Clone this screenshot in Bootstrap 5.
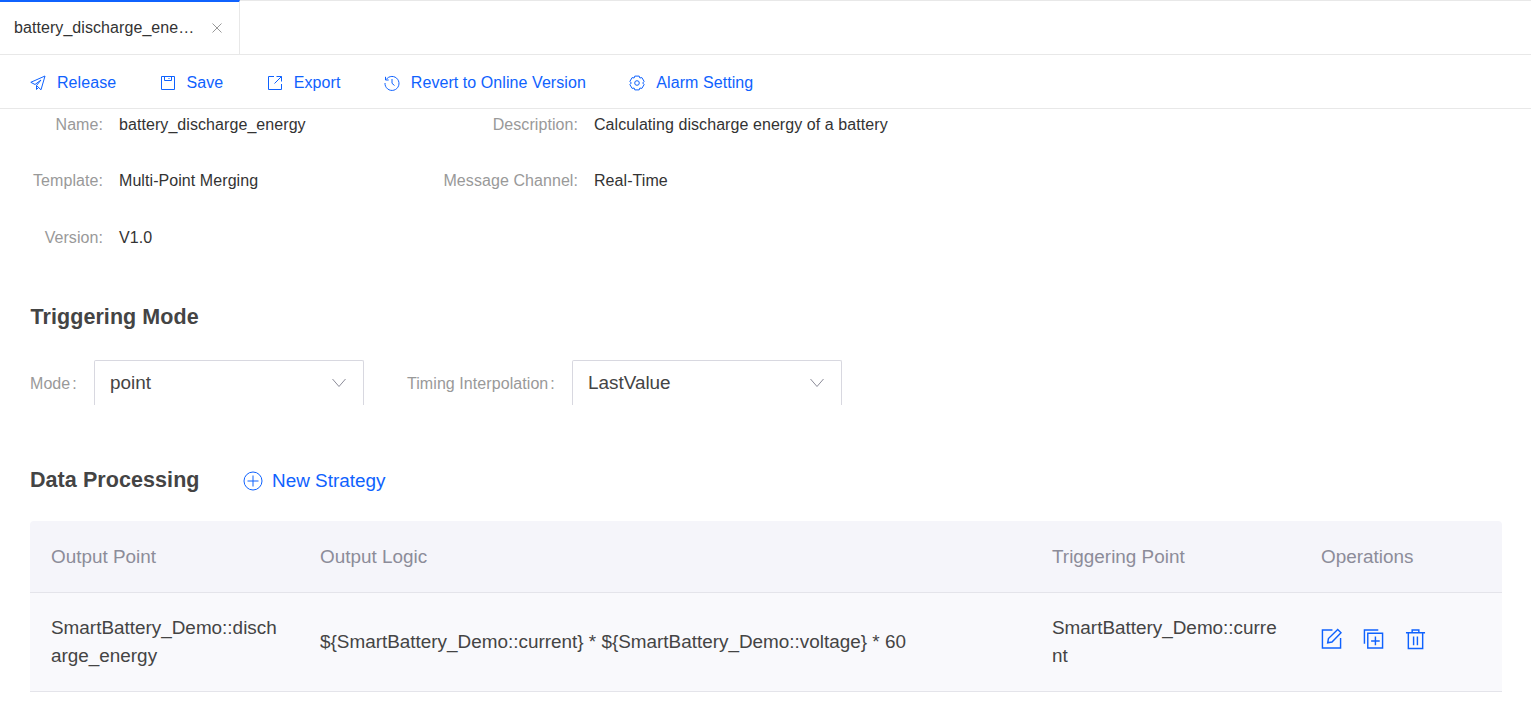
<!DOCTYPE html>
<html lang="en">
<head>
<meta charset="UTF-8">
<title>battery_discharge_energy</title>
<link href="https://cdn.jsdelivr.net/npm/bootstrap@5.3.3/dist/css/bootstrap.min.css" rel="stylesheet">
<style>
html, body { height: 707px; overflow: hidden; }
body { font-family: "Liberation Sans", Arial, sans-serif; font-size: 16px; letter-spacing: .07px; color: #333; background: #fff; }
.tab-strip { height: 55px; border-top: 1px solid #e8e8e8; border-bottom: 1px solid #e8e8e8; }
.tab-active { width: 240px; height: 54px; margin-top: -1px; border-top: 2px solid #0f62fe; border-right: 1px solid #e8e8e8; background: #fff; padding: 0 17px 0 14px; color: #333; }
.tab-title { width: 182px; white-space: nowrap; overflow: hidden; text-overflow: ellipsis; }
.tool-strip { height: 54px; border-bottom: 1px solid #e8e8e8; padding-left: 30px; gap: 43.4px; }
.tool-item { color: #0f62fe; gap: 11px; text-decoration: none; padding-top: 2px; }
.form-area { padding-top: 3.7px; }
.field-row { height: 56.5px; }
.f-label { color: #999; text-align: right; flex: none; white-space: nowrap; }
.f-label.one { width: 103px; }
.f-label.two { width: 259px; }
.f-value { flex: none; white-space: nowrap; margin-left: 16px; }
.f-value.one { width: 200px; }
.sec-title { font-size: 21.5px; font-weight: 700; color: #444; margin: 0; line-height: 26px; }
.sec-trigger { margin: 21.8px 0 0 30.5px; }
.mode-row { padding-left: 30px; margin-top: 30px; height: 45px; }
.mode-label { color: #999; flex: none; text-align: right; white-space: nowrap; padding-top: 3px; }
.mode-label i { font-style: normal; margin-left: 2px; }
.label-mode { width: 45px; margin-right: 19px; }
.label-timing { width: 146px; margin-left: 43px; margin-right: 19px; }
.fake-select { width: 270px; height: 45px; border: 1px solid #d8d8e0; border-bottom: 0; border-radius: 2px 2px 0 0; padding: 0 16px 0 15px; font-size: 18.9px; letter-spacing: 0; color: #444; }
.data-head { margin: 62px 0 28px 30px; height: 26px; }
.new-link { color: #0f62fe; font-size: 18.9px; letter-spacing: 0; gap: 9px; margin-left: 43.5px; padding-top: 2px; }
.data-table { margin: 0 29px 0 30px; font-size: 18.9px; letter-spacing: 0; }
.t-head { height: 72px; background: #f5f5fa; color: #8c8c99; border-bottom: 1px solid #e4e4ea; border-radius: 4px 4px 0 0; padding-top: 1px; }
.t-body { height: 99px; background: #f9f9fc; color: #444; line-height: 28px; border-bottom: 1px solid #e4e4ea; }
.c-one { width: 269px; padding-left: 21px; padding-right: 16px; word-break: break-all; flex: none; }
.c-two { width: 732px; padding-left: 21px; flex: none; }
.c-three { width: 269px; padding-left: 21px; padding-right: 16px; word-break: break-all; flex: none; }
.c-four { padding-left: 21px; flex: none; }
.op-icons { gap: 21px; color: #0f62fe; padding-bottom: 5px; }
</style>
</head>
<body>
<div class="tab-strip d-flex">
  <div class="tab-active d-flex align-items-center justify-content-between">
    <span class="tab-title">battery_discharge_energy</span>
    <svg width="10" height="10" viewBox="0 0 10 10" fill="none" stroke="#999" stroke-width="1"><path d="M.5.5l9 9M9.500.5l-9 9"/></svg>
  </div>
</div>
<div class="tool-strip d-flex align-items-center">
  <a class="tool-item d-flex align-items-center" href="#">
    <svg width="16" height="16" viewBox="0 0 16 16" fill="none" stroke="currentColor"><path d="M15 1 .8 7.300 5 9.500 11 5 6.500 10.500 11 14.800 15 1ZM6.500 10.500V14.500L8.500 12.500"/></svg>Release</a>
  <a class="tool-item d-flex align-items-center" href="#">
    <svg width="16" height="16" viewBox="0 0 16 16" fill="none" stroke="currentColor"><path d="M1.500 1.500h13v13h-13zM4.500 1.500v4h7v-4M9 3v1"/></svg>Save</a>
  <a class="tool-item d-flex align-items-center" href="#">
    <svg width="16" height="16" viewBox="0 0 16 16" fill="none" stroke="currentColor"><path d="M7 1.500H1.500v13h13V9M9.500 1.500h5v5M14.500 1.500 7.500 8.500"/></svg>Export</a>
  <a class="tool-item d-flex align-items-center" href="#">
    <svg width="16" height="16" viewBox="0 0 16 16" fill="none" stroke="currentColor"><path d="M2.200 4.500A7 7 0 1 1 1 8M1.500 1.800V5H4.700M8 4v4.300l2.500 2.200"/></svg>Revert to Online Version</a>
  <a class="tool-item d-flex align-items-center" href="#">
    <svg width="16" height="16" viewBox="0 0 16 16" fill="none" stroke="currentColor"><path d="M5.800 1.100h4.400l.7 1.900 2-.4 2.200 3.800L13.700 8l1.400 1.600-2.200 3.800-2-.4-.7 1.900H5.800l-.7-1.900-2 .4L.9 9.600 2.300 8 .9 6.400l2.200-3.800 2 .4z"/><circle cx="8" cy="8" r="2.300"/></svg>Alarm Setting</a>
</div>

<div class="form-area">
  <div class="field-row d-flex">
    <div class="f-label one">Name:</div><div class="f-value one">battery_discharge_energy</div>
    <div class="f-label two">Description:</div><div class="f-value">Calculating discharge energy of a battery</div>
  </div>
  <div class="field-row d-flex">
    <div class="f-label one">Template:</div><div class="f-value one">Multi-Point Merging</div>
    <div class="f-label two">Message Channel:</div><div class="f-value">Real-Time</div>
  </div>
  <div class="field-row d-flex">
    <div class="f-label one">Version:</div><div class="f-value one">V1.0</div>
  </div>
</div>

<h2 class="sec-title sec-trigger">Triggering Mode</h2>
<div class="mode-row d-flex align-items-center">
  <span class="mode-label label-mode">Mode<i>:</i></span>
  <div class="fake-select d-flex align-items-center justify-content-between">point
    <svg width="16" height="10" viewBox="0 0 16 10" fill="none" stroke="#8c8c99"><path d="M1.500 1 8 8.500 14.500 1"/></svg>
  </div>
  <span class="mode-label label-timing">Timing Interpolation<i>:</i></span>
  <div class="fake-select d-flex align-items-center justify-content-between">LastValue
    <svg width="16" height="10" viewBox="0 0 16 10" fill="none" stroke="#8c8c99"><path d="M1.500 1 8 8.500 14.500 1"/></svg>
  </div>
</div>

<div class="data-head d-flex align-items-center">
  <h2 class="sec-title">Data Processing</h2>
  <a class="new-link d-flex align-items-center text-decoration-none" href="#">
    <svg width="20" height="20" viewBox="0 0 20 20" fill="none" stroke="currentColor"><circle cx="10" cy="10" r="9"/><path d="M10 4.500v11M4.500 10h11"/></svg>New Strategy</a>
</div>

<div class="data-table">
  <div class="t-head d-flex align-items-center">
    <div class="c-one">Output Point</div><div class="c-two">Output Logic</div><div class="c-three">Triggering Point</div><div class="c-four">Operations</div>
  </div>
  <div class="t-body d-flex align-items-center">
    <div class="c-one">SmartBattery_Demo::discharge_energy</div>
    <div class="c-two">${SmartBattery_Demo::current} * ${SmartBattery_Demo::voltage} * 60</div>
    <div class="c-three">SmartBattery_Demo::current</div>
    <div class="c-four op-icons d-flex">
      <svg width="21" height="22" viewBox="0 0 22 22" fill="none" stroke="currentColor" stroke-width="1.500"><path d="M12 1.500H1.500v19h19V10M7 15l.8-4.500L17.500 1l3.500 3.500-9.500 9.700z"/></svg>
      <svg width="21" height="22" viewBox="0 0 22 22" fill="none" stroke="currentColor" stroke-width="1.500"><path d="M1.500 16V1.500H16M5 5h15.500v15.500H5zM13 8.500v9M8.500 13h9"/></svg>
      <svg width="21" height="22" viewBox="0 0 22 22" fill="none" stroke="currentColor" stroke-width="1.500"><path d="M1 4.500h20M7.500 4.500V1.500h7v3M3.500 4.500v16.500h15V4.500M9 8.500v9M13 8.500v9"/></svg>
    </div>
  </div>
</div>
</body>
</html>
